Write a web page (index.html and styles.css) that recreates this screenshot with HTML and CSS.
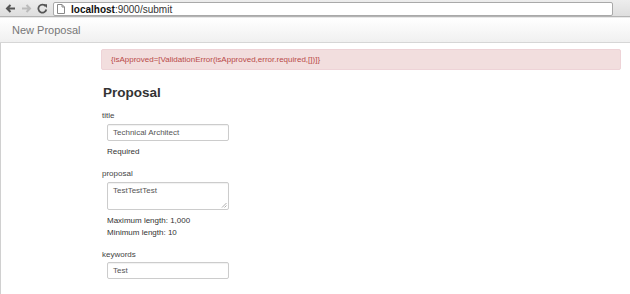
FILE: index.html
```html
<!DOCTYPE html>
<html>
<head>
<meta charset="utf-8">
<link rel="stylesheet" href="styles.css">
</head>
<body>
<div class="chrome">
  <div class="navbtns">
    <svg class="ic" width="11" height="11" viewBox="0 0 11 11"><path d="M10 5.5H2.5M5.5 2L2 5.5L5.5 9" fill="none" stroke="#555" stroke-width="2"/></svg>
    <svg class="ic" width="11" height="11" viewBox="0 0 11 11"><path d="M1 5.5H8.5M5.5 2L9 5.5L5.5 9" fill="none" stroke="#bbb" stroke-width="2"/></svg>
    <svg class="ic" width="11" height="11" viewBox="0 0 11 11"><path d="M8.6 3.2A4 4 0 1 0 9.3 6.5" fill="none" stroke="#555" stroke-width="1.8"/><path d="M6.2 1.2L10 1.2L10 5Z" fill="#555"/></svg>
  </div>
  <div class="omnibox">
    <svg class="page" width="8" height="10" viewBox="0 0 8 10"><path d="M0.5 0.5H5L7.5 3V9.5H0.5Z M5 0.5V3H7.5" fill="#fff" stroke="#888" stroke-width="1"/></svg>
    <span class="url"><b>localhost</b>:9000/submit</span>
  </div>
</div>
<div class="navbar"><span class="brand">New Proposal</span></div>
<div class="page-body">
  <div class="container">
    <div class="alert">{isApproved=[ValidationError(isApproved,error.required,[])]}</div>
    <h1 class="title">Proposal</h1>
    <div class="field">
      <div class="label">title</div>
      <div class="controls">
        <div class="input">Technical Architect</div>
        <div class="help first">Required</div>
      </div>
    </div>
    <div class="field">
      <div class="label">proposal</div>
      <div class="controls">
        <div class="input textarea">TestTestTest
          <svg class="grip" width="6" height="6" viewBox="0 0 6 6"><path d="M5.5 1L1 5.5M5.5 3.5L3.5 5.5" stroke="#999" stroke-width="0.8"/></svg>
        </div>
        <div class="help">Maximum length: 1,000</div>
        <div class="help">Minimum length: 10</div>
      </div>
    </div>
    <div class="field">
      <div class="label">keywords</div>
      <div class="controls tight">
        <div class="input">Test</div>
      </div>
    </div>
  </div>
</div>
</body>
</html>
```
FILE: styles.css
```css
html, body {
  margin: 0;
  padding: 0;
  background: #fff;
  font-family: "Liberation Sans", Arial, sans-serif;
  width: 630px;
  height: 294px;
  overflow: hidden;
}
.chrome {
  height: 17px;
  background: linear-gradient(#ededed, #dedede);
  border-bottom: 1px solid #b4b4b4;
  display: flex;
  align-items: center;
  box-sizing: border-box;
}
.navbtns {
  display: flex;
  gap: 5px;
  padding-left: 5px;
  width: 48px;
  box-sizing: border-box;
}
.omnibox {
  margin-left: 5px;
  width: 560px;
  height: 14px;
  margin-top: 2px;
  align-self: flex-start;
  background: #fff;
  border: 1px solid #a9a9a9;
  border-radius: 2px;
  box-sizing: border-box;
  display: flex;
  align-items: center;
  padding-left: 3px;
}
.page { margin-right: 6px; }
.url {
  font-size: 10px;
  color: #333;
}
.url b { color: #111; }
.navbar {
  height: 26px;
  background: linear-gradient(#fff, #f0f0f0);
  border-top: 1px solid #e9e9e9;
  border-bottom: 1px solid #d6d6d6;
  box-sizing: border-box;
  display: flex;
  align-items: center;
  padding-left: 12px;
}
.brand {
  font-size: 11px;
  color: #777;
}
.page-body {
  border-left: 1px solid #d0d0d0;
  height: 251px;
  box-sizing: border-box;
}
.container {
  margin-left: 100px;
  width: 520px;
  padding-top: 6px;
}
.alert {
  height: 21px;
  box-sizing: border-box;
  background: #f2dede;
  border: 1px solid #eed3d7;
  border-radius: 2px;
  color: #b94a48;
  font-size: 8px;
  padding-left: 9px;
  display: flex;
  align-items: center;
}
.title {
  margin: 14px 0 0 2px;
  font-size: 13.5px;
  font-weight: bold;
  color: #333;
  line-height: 17px;
}
.field {
  margin-left: 1px;
}
.label {
  font-size: 8px;
  color: #444;
  line-height: 10px;
}
.title + .field .label { margin-top: 10px; }
.field + .field .label { margin-top: 11px; }
.controls {
  margin-left: 5px;
  padding-top: 3px;
}
.controls.tight { padding-top: 2px; }
.input {
  width: 122px;
  height: 17px;
  box-sizing: border-box;
  border: 1px solid #cccccc;
  border-radius: 2px;
  box-shadow: inset 0 1px 1px rgba(0,0,0,0.06);
  font-size: 8px;
  color: #555;
  padding-left: 5px;
  display: flex;
  align-items: center;
  position: relative;
}
.textarea {
  height: 28px;
  align-items: flex-start;
  padding-top: 3px;
}
.grip {
  position: absolute;
  right: 1px;
  bottom: 1px;
}
.help {
  font-size: 8px;
  color: #333;
  line-height: 12px;
}
.help.first { margin-top: 5px; }
.textarea + .help { margin-top: 5px; }
```
